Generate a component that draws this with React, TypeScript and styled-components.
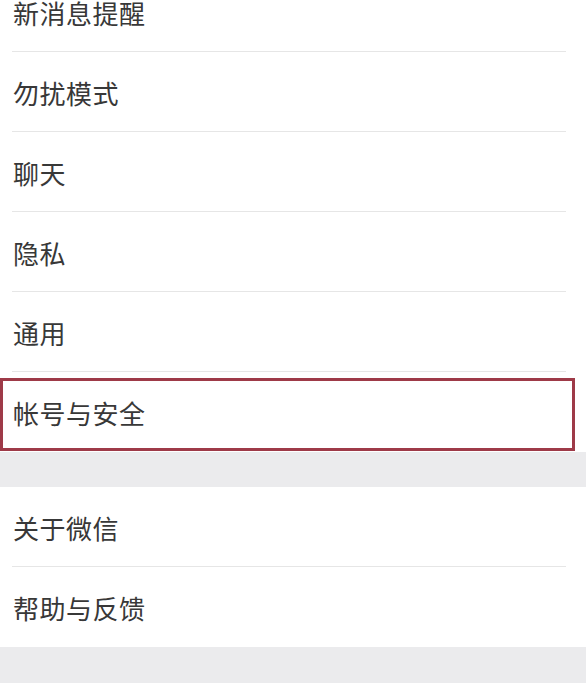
import React from "react";
import styled, { createGlobalStyle } from "styled-components";

const GlobalStyle = createGlobalStyle`
  html, body {
    margin: 0;
    padding: 0;
    background: #ebebed;
  }
  body {
    font-family: "Noto Sans CJK SC", "Noto Sans", sans-serif;
  }
`;

const Page = styled.div`
  width: 586px;
  height: 683px;
  overflow: hidden;
  background: #ebebed;
`;

const Group = styled.div<{ $shift?: number }>`
  background: #ffffff;
  margin-top: ${(p) => p.$shift ?? 0}px;
`;

const Gap = styled.div`
  height: 35px;
  background: #ebebed;
`;

const Row = styled.div<{ $divider: boolean }>`
  position: relative;
  height: 79px;
  margin: 0 20px 0 12px;
  padding-left: 1px;
  display: flex;
  align-items: center;
  border-bottom: 1px solid ${(p) => (p.$divider ? "#e6e6e6" : "transparent")};
`;

const Label = styled.span`
  font-family: "Noto Sans CJK SC", "Noto Sans", sans-serif;
  font-size: 26px;
  line-height: 1;
  color: #383838;
  letter-spacing: 0.5px;
  margin-top: 2px;
`;

const Highlight = styled.div`
  position: absolute;
  top: 6px;
  bottom: 0;
  left: -12px;
  right: -9px;
  border: 3px solid #9e3a48;
  pointer-events: none;
`;

type Item = { label: string; highlight?: boolean };

const groupOne: Item[] = [
  { label: "新消息提醒" },
  { label: "勿扰模式" },
  { label: "聊天" },
  { label: "隐私" },
  { label: "通用" },
  { label: "帐号与安全", highlight: true },
];

const groupTwo: Item[] = [{ label: "关于微信" }, { label: "帮助与反馈" }];

function List({ items, shift }: { items: Item[]; shift?: number }) {
  return (
    <Group $shift={shift}>
      {items.map((item, i) => (
        <Row key={item.label} $divider={i < items.length - 1}>
          <Label>{item.label}</Label>
          {item.highlight && <Highlight />}
        </Row>
      ))}
    </Group>
  );
}

export default function App() {
  return (
    <>
      <GlobalStyle />
      <Page>
        <List items={groupOne} shift={-28} />
        <Gap />
        <List items={groupTwo} />
      </Page>
    </>
  );
}
